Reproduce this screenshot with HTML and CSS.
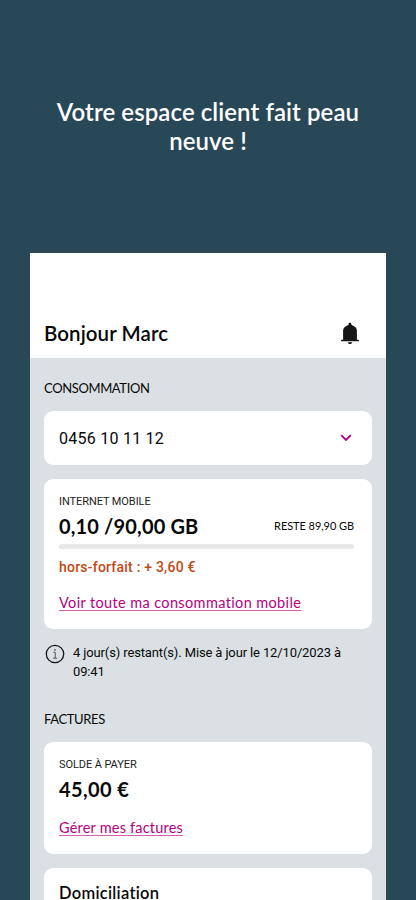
FILE: index.html
```
<!DOCTYPE html>
<html lang="fr">
<head>
<meta charset="utf-8">
<meta name="viewport" content="width=device-width, initial-scale=1">
<title>Espace client</title>
<link rel="stylesheet" href="styles.css">
</head>
<body>
<h1 class="headline">Votre espace client fait peau<br>neuve !</h1>
<main class="phone">
  <header class="topbar">
    <h2 class="greeting">Bonjour Marc</h2>
    <svg class="bell" width="20" height="24" viewBox="0 0 20 24" aria-hidden="true">
      <path d="M10 .7c.9 0 1.400.6 1.400 1.400v.6c.5.300 1 .6 1.700 1 2.600 1.300 3.800 2.600 3.800 5v9.100h2v1.400H1.100v-1.400h2V8.700c0-2.400 1.200-3.700 3.800-5 .7-.4 1.200-.7 1.700-1v-.6C8.600 1.300 9.100.7 10 .7zM7.900 20.200h4.200c-.2 1.200-1 1.900-2.100 1.900s-1.900-.7-2.100-1.900z" fill="#151515"/>
    </svg>
  </header>
  <div class="content">
    <h3 class="section usage">CONSOMMATION</h3>
    <div class="card number-card">
      <span class="number">0456 10 11 12</span>
      <svg class="chevron" width="12" height="8" viewBox="0 0 12 8" aria-hidden="true"><path d="M1.200 1.200 6 6l4.800-4.800" fill="none" stroke="#b5007c" stroke-width="1.900"/></svg>
    </div>
    <div class="card data-card">
      <div class="label internet">INTERNET MOBILE</div>
      <div class="data-row">
        <strong class="amount data-amount">0,10 /90,00 GB</strong>
        <span class="left">RESTE 89,90 GB</span>
      </div>
      <div class="bar"></div>
      <div class="extra">hors-forfait : + 3,60 €</div>
      <a class="link usage-link" href="#">Voir toute ma consommation mobile</a>
    </div>
    <div class="notice">
      <svg width="20" height="20" viewBox="0 0 20 20" aria-hidden="true"><circle cx="10" cy="10" r="8.700" fill="none" stroke="#151515" stroke-width="1.300"/><path d="M8.300 8.200h1.900v6M8.100 14.200h4" fill="none" stroke="#444" stroke-width=".9"/><circle cx="10" cy="5.900" r=".8" fill="#444"/></svg>
      <p class="notice-text">4 jour(s) restant(s). Mise à jour le 12/10/2023 à<br>09:41</p>
    </div>
    <h3 class="section bills">FACTURES</h3>
    <div class="card bill-card">
      <div class="label due">SOLDE À PAYER</div>
      <strong class="amount due-amount">45,00 €</strong>
      <a class="link bill-link" href="#">Gérer mes factures</a>
    </div>
    <div class="card debit-card"><h4 class="debit">Domiciliation</h4></div>
  </div>
</main>
</body>
</html>
```
FILE: styles.css
```
* { box-sizing: border-box; margin: 0; }
html, body { height: 900px; overflow: hidden; }
body { background: #284858; color: #080808; font-family: Lato, "Open Sans", sans-serif; white-space: nowrap; font-variant-ligatures: none; }
.headline { height: 253px; padding-top: 97px; text-align: center; color: #fff; font-size: 24px; line-height: 29px; font-weight: 600; letter-spacing: .08px; }
.phone { width: 356px; height: 647px; margin-left: 30px; background: #dae0e3; overflow: hidden; }
.topbar { height: 105px; padding: 68px 26px 0 14px; background: #fff; display: flex; justify-content: space-between; align-items: flex-start; }
.greeting { font-size: 20.5px; line-height: 24px; font-weight: 600; letter-spacing: .08px; }
.bell { margin-top: 1px; }
.content { padding: 20px 14px 0; }
.section { font-size: 13px; line-height: 20px; font-weight: 400; letter-spacing: -.37px; }
.card { background: #fff; border-radius: 9px; padding: 0 18px 0 15px; }
.number-card { height: 54px; margin-top: 13px; display: flex; align-items: center; justify-content: space-between; padding-right: 20px; }
.number { margin-top: 1px; font: 400 16px/20px Roboto, sans-serif; letter-spacing: .25px; }
.data-card { height: 150px; margin-top: 14px; padding-top: 15px; }
.label { font: 400 11px/16px Roboto, sans-serif; letter-spacing: -.08px; color: #222; }
.internet { height: 16px; }
.data-row { display: flex; justify-content: space-between; align-items: center; height: 31px; }
.amount { display: block; font-size: 20px; line-height: 28px; font-weight: 700; letter-spacing: .15px; }
.left { font-size: 11px; line-height: 16px; letter-spacing: -.07px; }
.bar { height: 5px; margin-top: 3px; border-radius: 3px; background: #e9e9e9; }
.extra { margin-top: 6px; font: 500 14px/24px Roboto, sans-serif; letter-spacing: .22px; color: #c04a16; }
.link { display: block; width: fit-content; color: #b5007c; font-size: 14.5px; line-height: 20px; text-decoration-thickness: 1px; text-underline-offset: 2px; text-decoration-color: #cf60a9; text-decoration-skip-ink: none; letter-spacing: .37px; }
.usage-link { margin-top: 14px; }
.notice { display: flex; gap: 8px; padding: 15px 0 0 1px; height: 56px; }
.notice-text { margin-top: -1px; font: 400 13px/19px Roboto, sans-serif; letter-spacing: -.13px; }
.notice svg { flex: none; }
.bills { margin-top: 24px; }
.bill-card { height: 112px; margin-top: 13px; padding-top: 15px; }
.due { height: 16px; }
.due-amount { margin-top: 2px; letter-spacing: .4px; }
.bill-link { margin-top: 15px; letter-spacing: .2px; }
.debit-card { height: 60px; margin-top: 14px; padding-top: 13px; }
.debit { font-size: 16.5px; line-height: 24px; font-weight: 600; letter-spacing: .28px; }
```
